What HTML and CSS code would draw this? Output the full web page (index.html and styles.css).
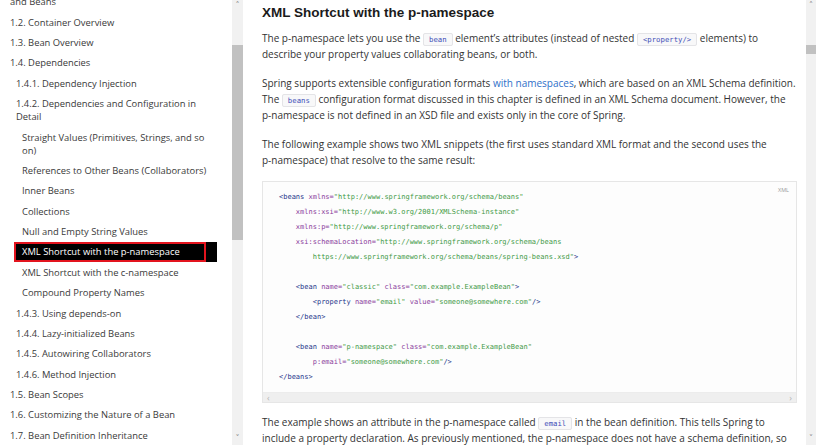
FILE: index.html
```html
<!DOCTYPE html>
<html>
<head>
<meta charset="utf-8">
<link rel="stylesheet" href="styles.css">
</head>
<body>
<div class="page">
  <nav class="sidebar">
    <ul class="toc">
      <li class="l1">1.1. Introduction to the Spring IoC Container<br>and Beans</li>
      <li class="l1">1.2. Container Overview</li>
      <li class="l1">1.3. Bean Overview</li>
      <li class="l1">1.4. Dependencies</li>
      <li class="l2">1.4.1. Dependency Injection</li>
      <li class="l2">1.4.2. Dependencies and Configuration in<br>Detail</li>
      <li class="l3">Straight Values (Primitives, Strings, and so<br>on)</li>
      <li class="l3">References to Other Beans (Collaborators)</li>
      <li class="l3">Inner Beans</li>
      <li class="l3">Collections</li>
      <li class="l3">Null and Empty String Values</li>
      <li class="l3 active"><span class="focus">XML Shortcut with the p-namespace</span></li>
      <li class="l3">XML Shortcut with the c-namespace</li>
      <li class="l3">Compound Property Names</li>
      <li class="l2">1.4.3. Using depends-on</li>
      <li class="l2">1.4.4. Lazy-initialized Beans</li>
      <li class="l2">1.4.5. Autowiring Collaborators</li>
      <li class="l2">1.4.6. Method Injection</li>
      <li class="l1">1.5. Bean Scopes</li>
      <li class="l1">1.6. Customizing the Nature of a Bean</li>
      <li class="l1">1.7. Bean Definition Inheritance</li>
      <li class="l1">1.8. Container Extension Points</li>
    </ul>
  </nav>
  <div class="vscroll side-scroll">
    <span class="arrow">&#708;</span>
    <div class="thumb side-thumb"></div>
    <div class="spacer"></div>
    <span class="arrow">&#709;</span>
  </div>
  <main class="content">
    <h2 class="title">XML Shortcut with the p-namespace</h2>
    <p>The p-namespace lets you use the <code>bean</code> element’s attributes (instead of nested <code>&lt;property/&gt;</code> elements) to describe your property values collaborating beans, or both.</p>
    <p>Spring supports extensible configuration formats <a href="#">with namespaces</a>, which are based on an XML Schema definition. The <code>beans</code> configuration format discussed in this chapter is defined in an XML Schema document. However, the <span class="nobr">p-namespace</span> is not defined in an XSD file and exists only in the core of Spring.</p>
    <p>The following example shows two XML snippets (the first uses standard XML format and the second uses the <span class="nobr">p-namespace)</span> that resolve to the same result:</p>
    <div class="codeblock">
      <span class="lang">XML</span>
<pre><span class="t">&lt;beans</span> <span class="a">xmlns=</span><span class="s">"http://www.springframework.org/schema/beans"</span>
    <span class="a">xmlns:xsi=</span><span class="s">"http://www.w3.org/2001/XMLSchema-instance"</span>
    <span class="a">xmlns:p=</span><span class="s">"http://www.springframework.org/schema/p"</span>
    <span class="a">xsi:schemaLocation=</span><span class="s">"http://www.springframework.org/schema/beans
        https://www.springframework.org/schema/beans/spring-beans.xsd"</span><span class="t">&gt;</span>

    <span class="t">&lt;bean</span> <span class="a">name=</span><span class="s">"classic"</span> <span class="a">class=</span><span class="s">"com.example.ExampleBean"</span><span class="t">&gt;</span>
        <span class="t">&lt;property</span> <span class="a">name=</span><span class="s">"email"</span> <span class="a">value=</span><span class="s">"someone@somewhere.com"</span><span class="t">/&gt;</span>
    <span class="t">&lt;/bean&gt;</span>

    <span class="t">&lt;bean</span> <span class="a">name=</span><span class="s">"p-namespace"</span> <span class="a">class=</span><span class="s">"com.example.ExampleBean"</span>
        <span class="a">p:email=</span><span class="s">"someone@somewhere.com"</span><span class="t">/&gt;</span>
<span class="t">&lt;/beans&gt;</span></pre>
      <div class="hscroll"><span class="harrow">&lsaquo;</span><span class="harrow">&rsaquo;</span></div>
    </div>
    <p>The example shows an attribute in the p-namespace called <code>email</code> in the bean definition. This tells Spring to include a property declaration. As previously mentioned, the p-namespace does not have a schema definition, so you can set the name of the attribute to the property name.</p>
  </main>
  <div class="vscroll main-scroll">
    <span class="arrow">&#708;</span>
    <div class="thumb main-thumb"></div>
    <div class="spacer"></div>
    <span class="arrow">&#709;</span>
  </div>
</div>
</body>
</html>
```
FILE: styles.css
```css
html, body {
  margin: 0;
  padding: 0;
  background: #fff;
}
body {
  font-family: "Open Sans", "Liberation Sans", sans-serif;
  height: 445px;
  overflow: hidden;
}
.page {
  display: flex;
  height: 445px;
}
.sidebar {
  width: 232px;
  flex: none;
  overflow: hidden;
  font-size: 9.4px;
  color: #3a3a3a;
}
.toc {
  list-style: none;
  margin: -21.4px 0 0;
  padding: 0 15px 0 0;
}
.toc li {
  padding: 3.7px 0;
  line-height: 13px;
  white-space: nowrap;
}
.toc .l1 { padding-left: 10px; }
.toc .l2 { padding-left: 16px; }
.toc .l3 { padding-left: 22px; }
.toc .active {
  margin-left: 14px;
  padding: 0;
  background: #000;
  color: #fff;
}
.focus {
  display: block;
  width: 182px;
  padding: 1.7px 0 1.7px 6px;
  border: 2px solid #e3141e;
  line-height: 13px;
}
.vscroll {
  flex: none;
  display: flex;
  flex-direction: column;
  align-items: stretch;
  background: #f1f1f1;
  height: 445px;
}
.side-scroll { width: 11px; }
.main-scroll { width: 10px; }
.arrow {
  height: 12px;
  line-height: 12px;
  font-size: 8px;
  color: #8a8a8a;
  text-align: center;
  font-family: "DejaVu Sans", sans-serif;
}
.thumb {
  background: #c1c1c1;
}
.side-thumb {
  margin-top: 33px;
  height: 195px;
}
.main-thumb {
  margin-top: 33px;
  height: 9px;
}
.spacer { flex: 1; }
.content {
  flex: 1;
  min-width: 0;
  padding: 5px 8px 0 19px;
  font-size: 10px;
  line-height: 16px;
  color: #333;
  overflow: hidden;
}
.nobr { white-space: nowrap; }
.title {
  margin: 0 0 9px;
  font-family: "Liberation Sans", Arial, sans-serif;
  font-size: 13.5px;
  line-height: 16px;
  font-weight: bold;
  color: #1b1b1b;
}
.content p {
  margin: 0 0 13px;
}
.content a {
  color: #2f70c9;
  text-decoration: none;
}
code {
  font-family: "DejaVu Sans Mono", monospace;
  font-size: 7.3px;
  line-height: 10px;
  color: #3e4eb8;
  background: #f8f8f9;
  border: 1px solid #e4e4e7;
  border-radius: 2px;
  padding: 1px 5px;
}
.codeblock {
  position: relative;
  margin: 0 1px 11px 0;
  border: 1px solid #e6e6e6;
  background: #fdfdfd;
}
.lang {
  position: absolute;
  top: 4px;
  right: 7px;
  font-size: 5.5px;
  line-height: 8px;
  color: #9a9a9a;
}
pre {
  margin: 0;
  padding: 8px 16px 7px;
  font-family: "DejaVu Sans Mono", monospace;
  font-size: 7px;
  line-height: 15px;
  color: #333;
}
.t { color: #23338a; }
.a { color: #8a3c9c; }
.s { color: #3f9a46; }
.hscroll {
  display: flex;
  justify-content: space-between;
  align-items: center;
  height: 9px;
  padding: 0 4px;
  background: #efefef;
  border-top: 1px solid #ececec;
}
.harrow {
  font-size: 9px;
  line-height: 9px;
  color: #b5b5b5;
}
```
